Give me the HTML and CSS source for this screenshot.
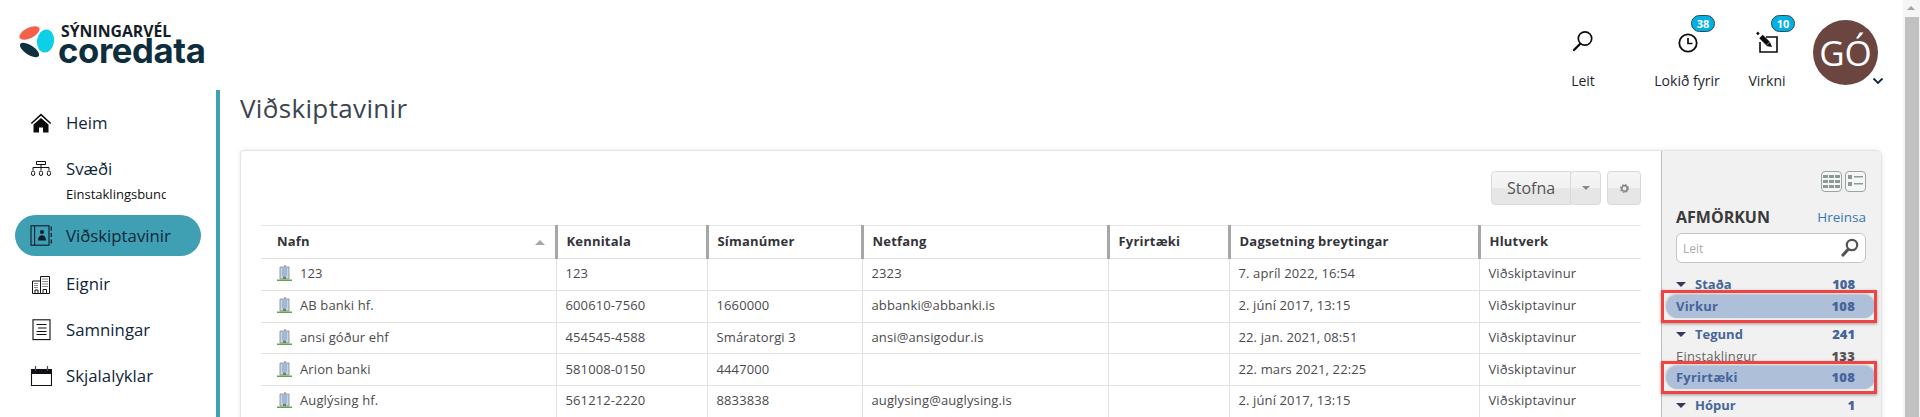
FILE: index.html
```html
<!DOCTYPE html>
<html lang="is">
<head>
<meta charset="utf-8">
<title>Viðskiptavinir</title>
<link rel="stylesheet" href="styles.css">
</head>
<body>
<div class="page">
  <div class="app">
    <header class="topbar">
      <div class="logo">
        <svg class="logo-mark" width="36" height="34" viewBox="0 0 36 34">
          <ellipse cx="10.5" cy="8" rx="11" ry="5.2" transform="rotate(-27 10.5 8)" fill="#f4604a"/>
          <ellipse cx="26.5" cy="16" rx="8.5" ry="11.5" transform="rotate(8 26.5 16)" fill="#0dcfe6"/>
          <ellipse cx="10.5" cy="25" rx="11" ry="4.8" transform="rotate(33 10.5 25)" fill="#0e3040"/>
        </svg>
        <div class="logo-text">
          <span class="logo-top">SÝNINGARVÉL</span>
          <span class="logo-main">coredata</span>
        </div>
      </div>
      <div class="actions">
        <div class="action action-search">
          <svg width="24" height="24" viewBox="0 0 24 24" fill="none" stroke="#0c0c0c"><circle cx="14" cy="8.500" r="6.700" stroke-width="1.700"/><path d="M9 14 3 20" stroke-width="2.400" stroke-linecap="round"/></svg>
          <span>Leit</span>
        </div>
        <div class="action action-locked">
          <span class="badge">38</span>
          <svg width="24" height="24" viewBox="0 0 24 24" fill="none" stroke="#0c0c0c"><circle cx="13" cy="13" r="8.700" stroke-width="1.800"/><path d="M13 8v5.500h4.500" stroke-width="1.700"/></svg>
          <span>Lokið fyrir</span>
        </div>
        <div class="action action-activity">
          <span class="badge">10</span>
          <svg width="24" height="24" viewBox="0 0 24 24" fill="none"><path d="M11 7h11v15H5V12" stroke="#0c0c0c" stroke-width="1.600"/><path d="M6 6.500 13 13.500" stroke="#0c0c0c" stroke-width="5"/><path d="M11 16 15 12 17 17z" fill="#0c0c0c"/><path d="M2 2.500 3.800 4.300" stroke="#0c0c0c" stroke-width="2.500"/></svg>
          <span>Virkni</span>
        </div>
        <div class="avatar">GÓ
          <svg class="chevron" width="12" height="8" viewBox="0 0 12 8" fill="none"><path d="M1.500 1.500 6 6l4.500-4.500" stroke="#10263a" stroke-width="1.800"/></svg>
        </div>
      </div>
    </header>
    <div class="body">
      <nav class="sidebar">
        <a class="nav-item">
          <svg width="22" height="22" viewBox="0 0 22 22"><path d="M11 1.500 .8 11l1 1.100L11 3.800l9.200 8.300 1-1.100z" fill="#0c0c0c"/><path d="M11 6 3.500 12.500V20.500h5.500v-5h4v5h5.500v-8z" fill="#0c0c0c"/></svg>
          <span>Heim</span>
        </a>
        <div class="nav-group">
          <a class="nav-item">
            <svg width="22" height="22" viewBox="0 0 22 22" fill="none" stroke="#111" stroke-width="1"><path d="M6.500 3.500h9v3h-9zM11 6.500V9M3 12V9.500h16V12M11 9.500V12"/><rect x="1.500" y="13" width="3.200" height="4.500" rx="1.600"/><rect x="9.400" y="13" width="3.200" height="4.500" rx="1.600"/><rect x="17.300" y="13" width="3.200" height="4.500" rx="1.600"/></svg>
            <span>Svæði</span>
          </a>
          <div class="nav-sub">Einstaklingsbundið</div>
        </div>
        <a class="nav-item active">
          <svg width="22" height="22" viewBox="0 0 22 22" fill="none" stroke="#0e1c2b" stroke-width="1.100"><rect x="1" y=".8" width="18" height="19.400"/><path d="M4.600 .8v19.400"/><circle cx="12" cy="7" r="2.100" fill="#0e1c2b" stroke="none"/><path d="M8 15.500c0-7 8-7 8 0z" fill="#0e1c2b" stroke="none"/><path d="M21.300 1.500v4M21.300 8v4M21.300 14.500v4" stroke-width="1.300"/></svg>
          <span>Viðskiptavinir</span>
        </a>
        <a class="nav-item">
          <svg width="22" height="22" viewBox="0 0 22 22" fill="none" stroke="#111" stroke-width="1"><path d="M2.500 8h8v12.500h-8zM10.500 3.500h9V20.500h-9z"/><path d="M4.500 10.500h4M4.500 12.500h4M4.500 14.500h4M12.500 6h5M12.500 8.500h5M12.500 11h5M12.500 13.500h5" stroke-dasharray="1 1"/><path d="M5 20v-3h3v3M13 20v-3.500h3.500V20"/></svg>
          <span>Eignir</span>
        </a>
        <a class="nav-item">
          <svg width="22" height="22" viewBox="0 0 22 22" fill="none" stroke="#111" stroke-width="1.100"><rect x="3" y=".8" width="17" height="19.800"/><path d="M6.500 5.500h10M8 9h8.500M6.500 12.500h10M6.500 15.500h10"/></svg>
          <span>Samningar</span>
        </a>
        <a class="nav-item">
          <svg width="22" height="22" viewBox="0 0 22 22"><path d="M1.500 4.500h20v16h-20z" fill="#fff" stroke="#111" stroke-width="1.100"/><path d="M1.500 4.500h20v4.500h-20z" fill="#111"/><path d="M5.500 1v5M17.500 1v5" stroke="#5a3d70" stroke-width="1.200"/></svg>
          <span>Skjalalyklar</span>
        </a>
      </nav>
      <main class="main">
        <h1 class="title">Viðskiptavinir</h1>
        <section class="card">
          <div class="content">
            <div class="toolbar">
              <div class="btn-group">
                <button class="btn btn-main">Stofna</button>
                <button class="btn btn-caret"><i class="caret"></i></button>
              </div>
              <button class="btn btn-gear">
                <svg width="9" height="9" viewBox="0 0 9 9"><circle cx="4.500" cy="4.500" r="2.800" fill="none" stroke="#8a8a8a" stroke-width="1.800"/><circle cx="4.500" cy="4.500" r="3.900" fill="none" stroke="#8a8a8a" stroke-width="1.200" stroke-dasharray="1.600 1.470"/></svg>
              </button>
            </div>
            <table class="grid">
              <colgroup>
                <col class="c-name"><col class="c-id"><col class="c-phone"><col class="c-mail"><col class="c-company"><col class="c-date"><col class="c-role">
              </colgroup>
              <thead>
                <tr>
                  <th class="name-head">Nafn<i class="sort"></i></th>
                  <th>Kennitala</th><th>Símanúmer</th><th>Netfang</th><th>Fyrirtæki</th><th>Dagsetning breytingar</th><th>Hlutverk</th>
                </tr>
              </thead>
              <tbody>
                <tr>
                  <td class="name"><svg class="bld" width="15" height="16" viewBox="0 0 15 16"><path d="M8 0v2" stroke="#d33" stroke-width="1"/><path d="M3 2h9v12H3z" fill="#c9d3de" stroke="#7f8a8f" stroke-width=".8"/><path d="M5 4h5M5 6h5M5 8h5M5 10h5" stroke="#6f9fdc" stroke-width="1"/><path d="M6 14v-2.500h3V14" fill="#777"/><path d="M0 15.250h15" stroke="#58a84c" stroke-width="1.500"/></svg>123</td>
                  <td>123</td><td></td><td>2323</td><td></td><td>7. apríl 2022, 16:54</td><td>Viðskiptavinur</td>
                </tr>
                <tr>
                  <td class="name"><svg class="bld" width="15" height="16" viewBox="0 0 15 16"><path d="M8 0v2" stroke="#d33" stroke-width="1"/><path d="M3 2h9v12H3z" fill="#c9d3de" stroke="#7f8a8f" stroke-width=".8"/><path d="M5 4h5M5 6h5M5 8h5M5 10h5" stroke="#6f9fdc" stroke-width="1"/><path d="M6 14v-2.500h3V14" fill="#777"/><path d="M0 15.250h15" stroke="#58a84c" stroke-width="1.500"/></svg>AB banki hf.</td>
                  <td>600610-7560</td><td>1660000</td><td>abbanki@abbanki.is</td><td></td><td>2. júní 2017, 13:15</td><td>Viðskiptavinur</td>
                </tr>
                <tr>
                  <td class="name"><svg class="bld" width="15" height="16" viewBox="0 0 15 16"><path d="M8 0v2" stroke="#d33" stroke-width="1"/><path d="M3 2h9v12H3z" fill="#c9d3de" stroke="#7f8a8f" stroke-width=".8"/><path d="M5 4h5M5 6h5M5 8h5M5 10h5" stroke="#6f9fdc" stroke-width="1"/><path d="M6 14v-2.500h3V14" fill="#777"/><path d="M0 15.250h15" stroke="#58a84c" stroke-width="1.500"/></svg>ansi góður ehf</td>
                  <td>454545-4588</td><td>Smáratorgi 3</td><td>ansi@ansigodur.is</td><td></td><td>22. jan. 2021, 08:51</td><td>Viðskiptavinur</td>
                </tr>
                <tr>
                  <td class="name"><svg class="bld" width="15" height="16" viewBox="0 0 15 16"><path d="M8 0v2" stroke="#d33" stroke-width="1"/><path d="M3 2h9v12H3z" fill="#c9d3de" stroke="#7f8a8f" stroke-width=".8"/><path d="M5 4h5M5 6h5M5 8h5M5 10h5" stroke="#6f9fdc" stroke-width="1"/><path d="M6 14v-2.500h3V14" fill="#777"/><path d="M0 15.250h15" stroke="#58a84c" stroke-width="1.500"/></svg>Arion banki</td>
                  <td>581008-0150</td><td>4447000</td><td></td><td></td><td>22. mars 2021, 22:25</td><td>Viðskiptavinur</td>
                </tr>
                <tr>
                  <td class="name"><svg class="bld" width="15" height="16" viewBox="0 0 15 16"><path d="M8 0v2" stroke="#d33" stroke-width="1"/><path d="M3 2h9v12H3z" fill="#c9d3de" stroke="#7f8a8f" stroke-width=".8"/><path d="M5 4h5M5 6h5M5 8h5M5 10h5" stroke="#6f9fdc" stroke-width="1"/><path d="M6 14v-2.500h3V14" fill="#777"/><path d="M0 15.250h15" stroke="#58a84c" stroke-width="1.500"/></svg>Auglýsing hf.</td>
                  <td>561212-2220</td><td>8833838</td><td>auglysing@auglysing.is</td><td></td><td>2. júní 2017, 13:15</td><td>Viðskiptavinur</td>
                </tr>
              </tbody>
            </table>
          </div>
          <aside class="filters">
            <div class="view-toggle">
              <span class="view-btn"><svg width="17" height="13" viewBox="0 0 17 13" fill="#8b9a97"><path d="M0 0h5v3H0zM6 0h5v3H6zM12 0h5v3h-5zM0 5h5v3H0zM6 5h5v3H6zM12 5h5v3h-5zM0 10h5v3H0zM6 10h5v3H6zM12 10h5v3h-5z"/></svg></span>
              <span class="view-btn"><svg width="15" height="13" viewBox="0 0 15 13" fill="#8b9a97"><path d="M0 0h4v4H0zM0 7h4v4H0zM6 1h9v1.500H6zM6 8h9v1.500H6z"/></svg></span>
            </div>
            <div class="filter-head"><strong>AFMÖRKUN</strong><a>Hreinsa</a></div>
            <div class="filter-search">
              <span>Leit</span>
              <svg width="18" height="20" viewBox="0 0 18 20" fill="none" stroke="#555"><circle cx="11" cy="7" r="5.200" stroke-width="2.200"/><path d="M7 11.500 2 17" stroke-width="3.200" stroke-linecap="round"/></svg>
            </div>
            <div class="f-group"><span><i class="tri"></i>Staða</span><b>108</b></div>
            <div class="f-item on"><span>Virkur</span><b>108</b></div>
            <div class="f-group"><span><i class="tri"></i>Tegund</span><b>241</b></div>
            <div class="f-item"><span>Einstaklingur</span><b>133</b></div>
            <div class="f-item on"><span>Fyrirtæki</span><b>108</b></div>
            <div class="f-group"><span><i class="tri"></i>Hópur</span><b>1</b></div>
          </aside>
        </section>
      </main>
    </div>
  </div>
  <div class="scrollbar"><i class="sb-arrow"></i><div class="sb-thumb"></div></div>
</div>
</body>
</html>
```
FILE: styles.css
```css
* { box-sizing: border-box; }
html, body { margin: 0; height: 417px; overflow: hidden; background: #fff; }
body { font-family: "Open Sans", "Liberation Sans", sans-serif; color: #333; }
.page { display: flex; height: 417px; overflow: hidden; }
.app { flex: 1; min-width: 0; }
.topbar { height: 90px; display: flex; justify-content: space-between; position: relative; }
.logo { display: flex; padding: 25px 0 0 19px; }
.logo-mark { display: block; }
.logo-text { display: flex; flex-direction: column; margin-left: 3px; margin-top: -3px; }
.logo-top { font-size: 15.800px; font-weight: 700; color: #141e26; line-height: 18px; margin-left: 3px; }
.logo-main { font-family: Inter, sans-serif; font-size: 34.700px; font-weight: 700; color: #0f2e3d; line-height: 24px; margin-top: -2px; letter-spacing: -.4px; white-space: nowrap; }
.actions { display: flex; align-items: flex-start; padding-right: 25px; }
.action { position: relative; display: flex; flex-direction: column; align-items: center; font-size: 14px; color: #1a2530; padding-top: 30px; white-space: nowrap; }
.action svg { display: block; }
.action > span:last-child { margin-top: 18px; line-height: 18px; }
.action-search { width: 60px; margin-right: 38px; }
.action-locked { width: 72px; margin-right: 14px; }
.action-activity { width: 60px; margin-right: 16px; }
.badge { position: absolute; top: 15px; left: 50%; width: 24px; height: 17px; margin-left: 4px; border-radius: 9px; background: #03b0e4; border: 1px solid #2a4a5a; color: #fff; font-size: 11px; font-weight: 700; line-height: 15px; text-align: center; }
.avatar { position: relative; width: 65px; height: 65px; margin-top: 20px; border-radius: 50%; background: #6b4540; color: #fff; font-size: 35px; line-height: 65px; text-align: center; }
.chevron { position: absolute; right: -6px; bottom: 0; }
.body { display: flex; height: 327px; }
.sidebar { width: 220px; flex: none; border-right: 4px solid #3f9fb3; padding: 12px 0 0 15px; display: flex; flex-direction: column; gap: 5px; }
.nav-item { display: flex; align-items: center; height: 41px; width: 186px; flex: none; padding-left: 15px; font-size: 16.800px; color: #10263a; }
.nav-item svg { flex: none; margin-right: 14px; }
.nav-item.active { background: #3f9fb3; border-radius: 21px; margin: 1px 0 2px; }
.nav-sub { width: 100px; margin: -5px 0 5px 51px; overflow: hidden; white-space: nowrap; font-size: 13px; line-height: 20px; color: #111; }
.main { flex: 1; min-width: 0; padding-left: 20px; }
.title { margin: 0; height: 60px; padding-top: 0; font-size: 26px; font-weight: 400; line-height: 36px; color: #3a4550; letter-spacing: .35px; }
.card { display: flex; width: 1642px; height: 280px; background: #fff; border: 1px solid #e4e4e4; border-radius: 4px 6px 0 0; box-shadow: 0 0 4px rgba(0,0,0,.1); overflow: hidden; }
.content { width: 1420px; flex: none; padding-left: 20px; }
.toolbar { display: flex; justify-content: flex-end; height: 74px; padding: 20px 20px 0 0; gap: 6px; align-items: flex-start; }
.btn-group { display: flex; }
.btn { height: 34px; border: 1px solid #d9d9d9; border-radius: 4px; background: linear-gradient(#f6f6f6 0, #f1f1f1 50%, #e6e6e6 52%, #e6e6e6 100%); color: #555; font: 16px/32px "Open Sans", sans-serif; padding: 0; display: flex; align-items: center; justify-content: center; }
.btn-main { width: 80px; border-radius: 4px 0 0 4px; }
.btn-caret { width: 31px; border-radius: 4px; margin-left: -1px; }
.btn-gear { width: 34px; }
.caret { width: 0; height: 0; border: 4px solid transparent; border-top-color: #888; border-bottom: 0; }
.grid { width: 1380px; border-collapse: collapse; table-layout: fixed; font-size: 13px; }
.c-name { width: 295px; }
.c-id { width: 151px; }
.c-phone { width: 155px; }
.c-mail { width: 246px; }
.c-company { width: 121px; }
.c-date { width: 250px; }
.c-role { width: 162px; }
.grid th { height: 33px; padding: 0 0 2px 9px; text-align: left; font-weight: 700; font-size: 13px; color: #33333a; letter-spacing: .2px; border-top: 1px solid #e6e6e6; border-bottom: 1px solid #e2e2e2; border-left: 3px solid #a6a6a6; white-space: nowrap; }
.grid th:first-child { border-left: 0; padding-left: 16px; }
.name-head { position: relative; }
.sort { position: absolute; right: 10px; top: 14px; width: 0; height: 0; border: 5px solid transparent; border-bottom: 5px solid #a8a8a8; border-top: 0; }
.grid td { height: 31.750px; padding: 0 0 2px 9px; color: #4a4a50; letter-spacing: .12px; border-bottom: 1px solid #e2e2e2; border-left: 1px solid #e2e2e2; white-space: nowrap; }
.grid td:first-child { border-left: 0; }
.grid td.name { padding-left: 16px; }
.bld { vertical-align: -3px; margin-right: 8px; }
.filters { flex: 1; background: #f1f1f1; border-left: 1px solid #bdbdbd; padding: 20px 15px 0 14px; font-size: 13px; }
.view-toggle { display: flex; justify-content: flex-end; gap: 3px; }
.view-btn { width: 21px; height: 21px; border: 1px solid #9aa5a3; border-radius: 4px; background: #f6f6f6; display: flex; align-items: center; justify-content: center; }
.filter-head { display: flex; justify-content: space-between; align-items: center; margin-top: 14px; height: 24px; padding-bottom: 2px; }
.filter-head strong { font-size: 16px; font-weight: 700; color: #3a3a3a; }
.filter-head a { font-size: 13.500px; color: #3a78b0; }
.filter-search { display: flex; justify-content: space-between; align-items: center; height: 30px; margin-top: 3px; padding: 0 6px; background: #fff; border: 1px solid #c6c6c6; border-radius: 6px; font-size: 12px; color: #aaa; }
.f-group, .f-item { display: flex; justify-content: space-between; align-items: center; font-weight: 700; color: #47659a; padding-right: 11px; }
.f-group { height: 22px; margin-top: 10px; }
.f-group span { display: flex; align-items: center; }
.tri { width: 0; height: 0; border: 5px solid transparent; border-top: 5px solid #3b3560; border-bottom: 0; margin-right: 9px; }
.f-item { height: 21px; letter-spacing: .2px; position: relative; }
.f-item span:first-child { font-weight: 400; color: #666; }
.f-item b { color: #555; }
.f-item.on { height: 23px; padding: 0 20px 2px 10px; background: #aebfd9; border-radius: 12px; margin: 0 -9px 0 -10px; box-shadow: 0 -1px 3px rgba(0,0,0,.25); }
.f-item.on span:first-child { font-weight: 700; color: #47659a; }
.f-item.on b { color: #47659a; }
.f-item.on::after { content: ""; position: absolute; left: -5px; right: -2px; top: -5px; bottom: -5px; border: 3px solid #f04444; box-shadow: 0 1px 3px rgba(0,0,0,.35); pointer-events: none; }
.f-item.on + .f-group { margin-top: 5px; }
.scrollbar { position: relative; width: 17px; flex: none; background: #f5f5f5; padding: 17px 0 0 2px; }
.sb-arrow { position: absolute; top: 6px; left: 4px; width: 0; height: 0; border: 4px solid transparent; border-bottom: 4px solid #a3a3a3; border-top: 0; }
.sb-thumb { width: 14px; height: 400px; background: #c1c1c1; }
```
